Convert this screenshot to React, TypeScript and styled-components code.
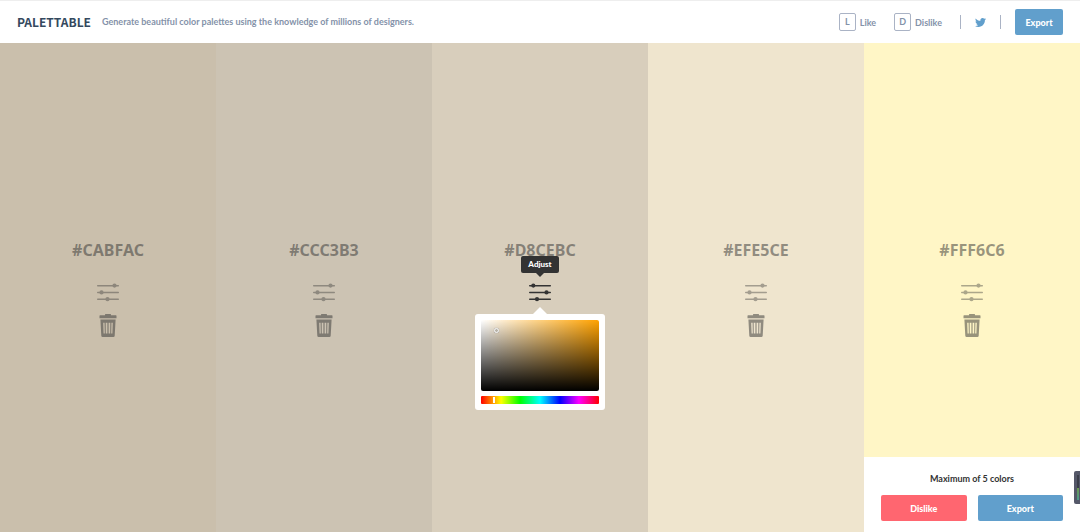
import React from 'react';
import styled, { createGlobalStyle } from 'styled-components';

const GlobalStyle = createGlobalStyle`
  *, *::before, *::after { box-sizing: border-box; }
  body {
    margin: 0;
    background: #fff;
    font-family: Lato, "Open Sans", sans-serif;
    font-size: 9px;
    font-weight: 700;
  }
  h1, h2, p { margin: 0; }
  button { font-family: inherit; border: 0; padding: 0; cursor: pointer; }
`;

const Page = styled.div`
  display: flex;
  flex-direction: column;
  min-height: 100vh;
`;

const Header = styled.header`
  display: flex;
  align-items: center;
  height: 43px;
  padding: 0 17px;
  border-top: 1px solid #eee;
  background: #fff;
  white-space: nowrap;
`;

const Logo = styled.h1`
  margin-right: 11px;
  color: #34495e;
  font-family: "Noto Sans CJK SC", "Noto Sans", sans-serif;
  font-size: 12px;
  line-height: 20px;
`;

const Tagline = styled.p`
  flex: 1;
  color: #8492a9;
  line-height: 20px;
`;

const Shortcut = styled.button`
  display: flex;
  align-items: center;
  gap: 4px;
  margin-right: 18px;
  background: none;
  color: #8492a9;
  font-size: 9px;
  font-weight: 700;
`;

const Key = styled.kbd`
  width: 17px;
  height: 18px;
  border: 1px solid #aab3c5;
  border-radius: 2px;
  font-family: inherit;
  line-height: 16px;
  text-align: center;
`;

const Share = styled.a`
  display: flex;
  align-items: center;
  height: 14px;
  margin-right: 14px;
  padding: 0 14px;
  border: solid #aab3c5;
  border-width: 0 1px;
  color: #619fcc;
`;

const ActionButton = styled.button<{ $tone: 'blue' | 'red'; $wide?: boolean }>`
  flex: ${(p) => (p.$wide ? '1' : '0 0 48px')};
  height: 26px;
  border-radius: 2px;
  background: ${(p) => (p.$tone === 'blue' ? '#619fcc' : '#ff6670')};
  color: #fff;
  font-size: 9px;
  font-weight: 900;
`;

const Palette = styled.main`
  position: relative;
  flex: 1;
  display: grid;
  grid-template-columns: repeat(5, 1fr);
`;

const Swatch = styled.section<{ $color: string }>`
  display: flex;
  flex-direction: column;
  align-items: center;
  justify-content: center;
  background: ${(p) => p.$color};
`;

const Hex = styled.h2`
  margin-bottom: 15px;
  color: rgba(51, 51, 51, 0.5);
  font-family: "Noto Sans", "Open Sans", sans-serif;
  font-size: 16px;
  line-height: 28px;
`;

const IconButton = styled.button<{ $opacity: number }>`
  display: flex;
  align-items: center;
  justify-content: center;
  width: 26px;
  height: 26px;
  background: none;
  color: #333;
  opacity: ${(p) => p.$opacity};
`;

const Tools = styled.div`
  position: relative;
  display: flex;
  flex-direction: column;
  align-items: center;
  gap: 8px;
`;

const Tooltip = styled.div`
  position: absolute;
  bottom: calc(100% + 6px);
  left: 50%;
  width: 38px;
  transform: translateX(-50%);
  border-radius: 2px;
  background: #333;
  color: #fff;
  font-size: 8px;
  font-weight: 900;
  line-height: 17px;
  text-align: center;
  &::after {
    content: '';
    position: absolute;
    top: 100%;
    left: 50%;
    margin-left: -4px;
    border: 4px solid transparent;
    border-top-color: #333;
    border-bottom: 0;
  }
`;

const Picker = styled.div`
  position: absolute;
  top: 35px;
  left: 50%;
  width: 130px;
  padding: 6px;
  transform: translateX(-50%);
  border-radius: 3px;
  background: #fff;
  &::before {
    content: '';
    position: absolute;
    bottom: 100%;
    left: 50%;
    margin-left: -7px;
    border: 7px solid transparent;
    border-bottom-color: #fff;
    border-top: 0;
  }
`;

const Shade = styled.div`
  position: relative;
  height: 71px;
  margin-bottom: 5px;
  border-radius: 2px;
  background:
    linear-gradient(to top, #000, transparent),
    linear-gradient(to right, #fff, transparent),
    #ffa200;
`;

const ShadeHandle = styled.span`
  position: absolute;
  top: 8px;
  left: 13px;
  width: 5px;
  height: 5px;
  border: 1px solid #fff;
  border-radius: 50%;
  background: #b8b3a8;
  box-shadow: 0 0 1px #888;
`;

const Hue = styled.div`
  position: relative;
  height: 8px;
  border-radius: 1px;
  background: linear-gradient(to right, #f00, #ff0 17%, #0f0 33%, #0ff 50%, #00f 67%, #f0f 83%, #f00);
`;

const HueHandle = styled.span`
  position: absolute;
  top: 1px;
  left: 12px;
  width: 2px;
  height: 6px;
  background: #fff;
`;

const Limit = styled.aside`
  position: absolute;
  right: 0;
  bottom: 0;
  width: 20%;
  padding: 11px 17px;
  background: #fff;
  text-align: center;
`;

const LimitText = styled.p`
  margin-bottom: 6px;
  color: #333;
  line-height: 21px;
`;

const LimitActions = styled.div`
  display: flex;
  gap: 11px;
`;

const Meter = styled.div`
  position: absolute;
  right: 0;
  bottom: 28px;
  width: 6px;
  height: 33px;
  padding: 4px 1px 4px 3px;
  border-radius: 2px 0 0 2px;
  background: #555869;
`;

const MeterBar = styled.div`
  height: 25px;
  background: linear-gradient(#3b3e4a 50%, #6f9a4d 50%, #4c9a8c);
`;

const SlidersIcon = ({ active }: { active?: boolean }) => {
  const dots = active ? [5.3, 18.5, 9] : [18.5, 5.5, 11.5];
  return (
    <svg width="24" height="20" viewBox="0 0 24 20" fill="currentColor" aria-hidden="true">
      {dots.map((x, i) => (
        <g key={i}>
          <rect x="1" y={2.9 + i * 6.8} width="22" height={1.5} rx="0.7" />
          <circle cx={x} cy={3.6 + i * 6.8} r="2.1" />
        </g>
      ))}
    </svg>
  );
};

const TrashIcon = () => (
  <svg width="18" height="24" viewBox="0 0 18 24" fill="currentColor" aria-hidden="true">
    <path d="M6 .6Q6 0 6.600 0h4.800q.6 0 .6.600V1.200h4.900q.6 0 .6.600V4.200H.5V1.800q0-.6.6-.6H6z" />
    <path
      fillRule="evenodd"
      d="M1.400 5.500h15.200l-.9 16.200q-.1 1.300-1.300 1.300H3.600q-1.200 0-1.300-1.300zM4.200 8.800l.4 10.700h1.200L5.600 8.800zM6.700 8.800l.1 10.700h1.600V8.800zM9.600 8.800v10.700h1.600l.1-10.700zM12.400 8.800l-.2 10.700h1.200l.4-10.700z"
    />
  </svg>
);

const TwitterIcon = () => (
  <svg width="11" height="11" viewBox="0 0 24 24" fill="currentColor" aria-hidden="true">
    <path d="M23.953 4.570a10 10 0 01-2.825.775 4.958 4.958 0 002.163-2.723c-.951.555-2.005.959-3.127 1.184a4.920 4.920 0 00-8.384 4.482C7.690 8.095 4.067 6.130 1.640 3.162a4.822 4.822 0 00-.666 2.475c0 1.710.870 3.213 2.188 4.096a4.904 4.904 0 01-2.228-.616v.060a4.923 4.923 0 003.946 4.827 4.996 4.996 0 01-2.212.085 4.936 4.936 0 004.604 3.417 9.867 9.867 0 01-6.102 2.105c-.390 0-.779-.023-1.170-.067a13.995 13.995 0 007.557 2.209c9.053 0 13.998-7.496 13.998-13.985 0-.210 0-.420-.015-.630A9.935 9.935 0 0024 4.590z" />
  </svg>
);

const colors = ['#CABFAC', '#CCC3B3', '#D8CEBC', '#EFE5CE', '#FFF6C6'];
const activeColor = '#D8CEBC';

export default function App() {
  return (
    <Page>
      <GlobalStyle />
      <Header>
        <Logo>PALETTABLE</Logo>
        <Tagline>Generate beautiful color palettes using the knowledge of millions of designers.</Tagline>
        <Shortcut><Key>L</Key>Like</Shortcut>
        <Shortcut><Key>D</Key>Dislike</Shortcut>
        <Share href="#share" aria-label="Share on Twitter"><TwitterIcon /></Share>
        <ActionButton $tone="blue">Export</ActionButton>
      </Header>
      <Palette>
        {colors.map((color) => {
          const active = color === activeColor;
          return (
            <Swatch key={color} $color={color}>
              <Hex>{color}</Hex>
              <Tools>
                <IconButton $opacity={active ? 1 : 0.4} aria-label={`Adjust ${color}`}>
                  <SlidersIcon active={active} />
                </IconButton>
                <IconButton $opacity={0.5} aria-label={`Remove ${color}`}>
                  <TrashIcon />
                </IconButton>
                {active && (
                  <>
                    <Tooltip role="tooltip">Adjust</Tooltip>
                    <Picker>
                      <Shade><ShadeHandle /></Shade>
                      <Hue><HueHandle /></Hue>
                    </Picker>
                  </>
                )}
              </Tools>
            </Swatch>
          );
        })}
        <Limit>
          <LimitText>Maximum of 5 colors</LimitText>
          <LimitActions>
            <ActionButton $tone="red" $wide>Dislike</ActionButton>
            <ActionButton $tone="blue" $wide>Export</ActionButton>
          </LimitActions>
          <Meter><MeterBar /></Meter>
        </Limit>
      </Palette>
    </Page>
  );
}
